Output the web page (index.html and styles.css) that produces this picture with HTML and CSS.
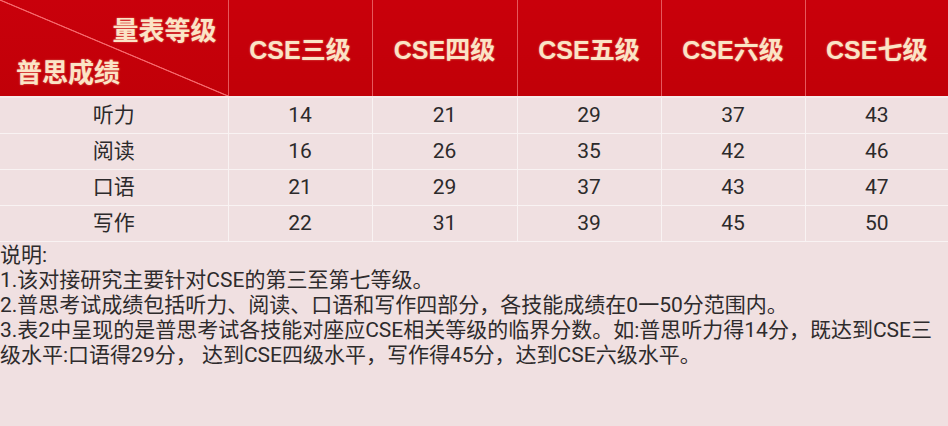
FILE: index.html
```html
<!DOCTYPE html>
<html lang="zh-CN">
<head>
<meta charset="utf-8">
<title>普思成绩与CSE等级对接</title>
<link rel="stylesheet" href="styles.css">
</head>
<body>
<table class="grade-table">
  <colgroup>
    <col class="c-first"><col class="c-144"><col class="c-145"><col class="c-144"><col class="c-144"><col class="c-143">
  </colgroup>
  <thead>
    <tr class="head-row">
      <th class="corner">
        <div class="corner-inner">
          <span class="corner-top">量表等级</span>
          <span class="corner-bottom">普思成绩</span>
        </div>
      </th>
      <th>CSE三级</th>
      <th>CSE四级</th>
      <th>CSE五级</th>
      <th>CSE六级</th>
      <th>CSE七级</th>
    </tr>
  </thead>
  <tbody>
    <tr class="r1"><td>听力</td><td>14</td><td>21</td><td>29</td><td>37</td><td>43</td></tr>
    <tr class="r2"><td>阅读</td><td>16</td><td>26</td><td>35</td><td>42</td><td>46</td></tr>
    <tr class="r3"><td>口语</td><td>21</td><td>29</td><td>37</td><td>43</td><td>47</td></tr>
    <tr class="r4"><td>写作</td><td>22</td><td>31</td><td>39</td><td>45</td><td>50</td></tr>
  </tbody>
</table>
<div class="notes">
  <p>说明:</p>
  <p>1.该对接研究主要针对CSE的第三至第七等级。</p>
  <p>2.普思考试成绩包括听力、阅读、口语和写作四部分，各技能成绩在0一50分范围内。</p>
  <p>3.表2中呈现的是普思考试各技能对座应CSE相关等级的临界分数。如:普思听力得14分，既达到CSE三<br>级水平:口语得29分， 达到CSE四级水平，写作得45分，达到CSE六级水平。</p>
</div>
</body>
</html>
```
FILE: styles.css
```css
html, body {
  margin: 0;
  padding: 0;
}
body {
  width: 948px;
  height: 426px;
  overflow: hidden;
  background: #f0e0e1;
  font-family: "Roboto", "Noto Sans CJK SC", sans-serif;
  color: #2c2a2b;
}
.grade-table {
  width: 948px;
  border-collapse: collapse;
  table-layout: fixed;
}
.c-first { width: 228px; }
.c-144 { width: 144px; }
.c-145 { width: 145px; }
.c-143 { width: 143px; }

.head-row th {
  height: 96px;
  padding: 0;
  background: linear-gradient(#c9000b, #c10008);
  color: #fbe4c6;
  font-family: "Liberation Sans", "Noto Sans CJK SC", sans-serif;
  font-weight: bold;
  font-size: 25px;
  text-align: center;
  vertical-align: middle;
  border-left: 1px solid #e6585c;
  text-shadow: 0 0 2px rgba(255, 225, 190, 0.55);
  box-sizing: border-box;
}
.head-row th:first-child {
  border-left: none;
}
.head-row .corner {
  background:
    linear-gradient(to top right, transparent calc(50% - 1px), #f5666a calc(50% - 0.3px), #f5666a calc(50% + 0.3px), transparent calc(50% + 1px)),
    linear-gradient(#c9000b, #c10008);
}
.corner-inner {
  display: flex;
  flex-direction: column;
  height: 96px;
  font-family: "Noto Sans CJK SC", sans-serif;
  font-size: 26px;
  line-height: 30px;
}
.corner-top {
  align-self: flex-end;
  margin: 14px 11px 0 0;
}
.corner-bottom {
  align-self: flex-start;
  margin: 12px 0 0 16px;
}

tbody td {
  height: 36px;
  padding: 0;
  text-align: center;
  vertical-align: middle;
  font-size: 21px;
  line-height: 24px;
  border-top: 1px solid #f9f3f3;
  border-left: 1px solid #f9f3f3;
  box-sizing: border-box;
}
tbody td:first-child {
  border-left: none;
}
tbody tr.r1 td { border-top: 2px solid #f7eaea; }
tbody tr.r4 td { border-bottom: 1px solid #f9f3f3; }

.notes {
  padding-top: 1px;
  font-size: 21px;
  line-height: 25px;
  color: #2e2b2c;
  white-space: nowrap;
}
.notes p {
  margin: 0;
}
```
